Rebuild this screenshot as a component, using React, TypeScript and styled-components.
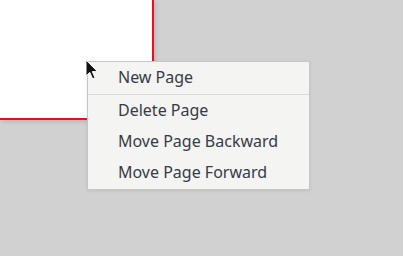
import styled, { createGlobalStyle } from "styled-components";

const GlobalStyle = createGlobalStyle`
  html, body {
    margin: 0;
    padding: 0;
    background: #d1d1d1;
  }
  body {
    font-family: "Noto Sans", "DejaVu Sans", sans-serif;
  }
`;

const items = [
  { label: "New Page", separatorAfter: true },
  { label: "Delete Page" },
  { label: "Move Page Backward" },
  { label: "Move Page Forward" },
];

export default function App() {
  return (
    <>
      <GlobalStyle />
      <Workspace>
        <Page />
        <Menu>
          {items.map((item) => (
            <div key={item.label}>
              <MenuItem>{item.label}</MenuItem>
              {item.separatorAfter && <Separator />}
            </div>
          ))}
        </Menu>
        <Cursor width="14" height="22" viewBox="0 0 14 22">
          <path
            d="M1 1 L1 17 L4.8 13.4 L7.6 19.8 L10 18.8 L7.3 12.6 L12.5 12.6 Z"
            fill="#111"
            stroke="#fff"
            strokeWidth="1"
            strokeLinejoin="round"
          />
        </Cursor>
      </Workspace>
    </>
  );
}

const Workspace = styled.div`
  position: relative;
  width: 403px;
  height: 256px;
  overflow: hidden;
  background: #d1d1d1;
`;

const Page = styled.div`
  width: 152px;
  height: 118px;
  background: #ffffff;
  border-right: 2px solid #e8101a;
  border-bottom: 2px solid #e8101a;
  box-shadow: 2px 2px 4px rgba(0, 0, 0, 0.12);
`;

// context menu sits over the page
const Menu = styled.div`
  position: absolute;
  left: 87px;
  top: 61px;
  width: 221px;
  padding: 0 0 1px;
  background: #f4f4f2;
  border: 1px solid #c6c6c6;
  box-shadow: 0 1px 3px rgba(0, 0, 0, 0.08);
`;

const MenuItem = styled.div`
  height: 31px;
  line-height: 31px;
  padding-left: 30px;
  font-size: 16px;
  color: #363b46;
  white-space: nowrap;
`;

const Separator = styled.div`
  height: 1px;
  margin: 1px 0 0;
  background: #d9d9d7;
`;

const Cursor = styled.svg`
  position: absolute;
  left: 85px;
  top: 59px;
`;
